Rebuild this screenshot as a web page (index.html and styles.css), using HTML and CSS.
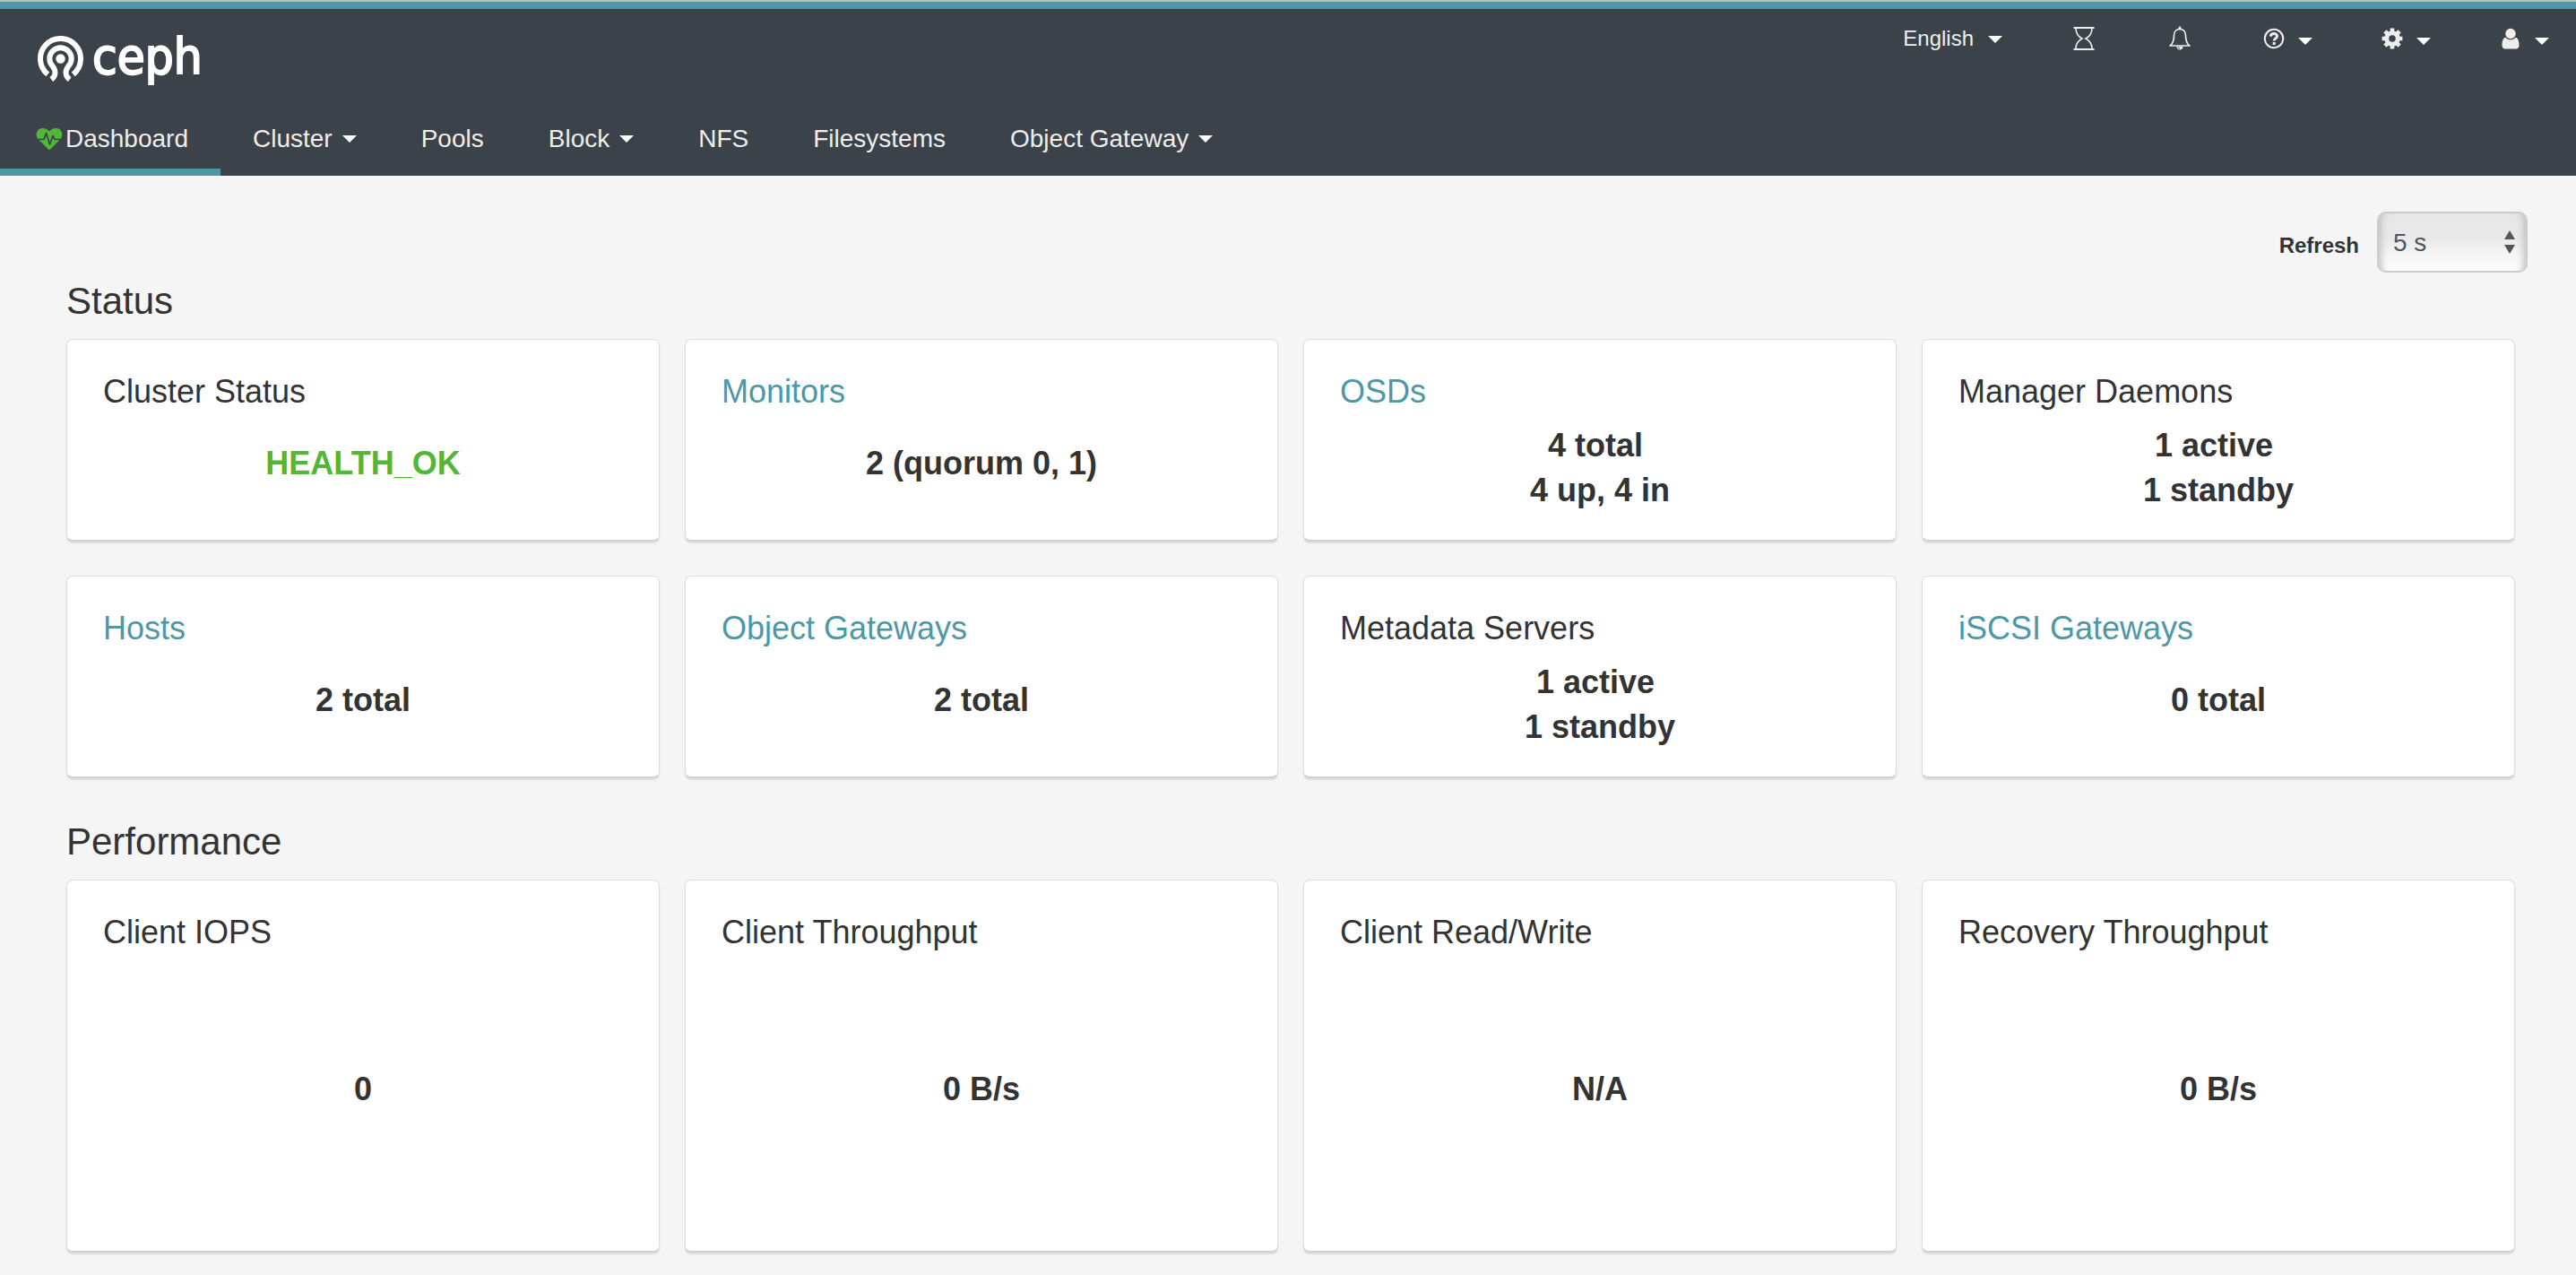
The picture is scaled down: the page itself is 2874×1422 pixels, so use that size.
FILE: index.html
```html
<!DOCTYPE html>
<html lang="en">
<head>
<meta charset="utf-8">
<meta name="viewport" content="width=device-width, initial-scale=1">
<title>Ceph</title>
<link rel="stylesheet" href="styles.css">
</head>
<body>
<header class="header">
  <div class="topbar">
    <a class="brand" href="#">
      <svg class="brand-mark" viewBox="0 0 51 51" fill="none" stroke="#fff" aria-hidden="true">
        <path stroke-width="6" d="M11.3 42.9A22.5 22.5 0 1 1 39.7 42.9"/>
        <path stroke-width="6" d="M15.3 48.6C20.5 44.5 20.5 39 17 34.2A12.2 12.2 0 1 1 34 34.2C30.5 39 30.5 44.5 35.7 48.6"/>
        <circle cx="25.5" cy="25.5" r="5.2" fill="#fff" stroke="none"/>
      </svg>
      <span class="brand-name">ceph</span>
    </a>
    <div class="tools">
      <button class="tool tool--language" type="button">English<span class="caret"></span></button>
      <button class="tool tool--single" type="button" aria-label="Background tasks">
        <svg class="tool-icon" viewBox="0 0 28 28" fill="none" stroke="#eee" stroke-width="1.6" aria-hidden="true">
          <path stroke-width="2" d="M2.5 2H25.5M2.5 26H25.5"/>
          <path d="M5 2.5C5 8.5 8 12 12 14C8 16 5 19.5 5 25.5M23 2.5C23 8.5 20 12 16 14C20 16 23 19.5 23 25.5"/>
        </svg>
      </button>
      <button class="tool tool--single" type="button" aria-label="Notifications">
        <svg class="tool-icon" viewBox="0 0 28 28" aria-hidden="true">
          <path fill="none" stroke="#eee" stroke-width="1.7" stroke-linejoin="round" d="M14 3.5C9.8 3.5 7.5 6.5 7.5 10.5C7.5 17 6 20 3 22H25C22 20 20.5 17 20.5 10.5C20.5 6.5 18.2 3.5 14 3.5Z"/>
          <path fill="#eee" d="M12.6 3.5V2A1.4 1.4 0 0 1 15.4 2V3.5ZM10.5 23H17.5A3.5 3.5 0 0 1 10.5 23Z"/>
          <path fill="none" stroke="#3b4249" d="M12.2 23.5A2 2 0 0 0 14 25.3"/>
        </svg>
      </button>
      <button class="tool" type="button" aria-label="Help">
        <svg class="tool-icon" viewBox="0 0 28 28" fill="none" stroke="#eee" aria-hidden="true">
          <circle cx="14" cy="14" r="10.2" stroke-width="2"/>
          <path stroke-width="3" d="M10.3 11.7C10.7 7.5 17.7 7.7 17.5 11.5C17.4 13.7 14.2 13.8 14.2 16.5"/>
          <path stroke-width="3" d="M14.2 18V21"/>
        </svg><span class="caret"></span>
      </button>
      <button class="tool" type="button" aria-label="Settings">
        <svg class="tool-icon" viewBox="0 0 28 28" fill="none" stroke="#eee" aria-hidden="true">
          <circle cx="14" cy="14" r="6.3" stroke-width="5"/>
          <path stroke-width="4.6" d="M14 2.6V6.5M14 21.5V25.4M2.6 14H6.5M21.5 14H25.4M5.9 5.9L8.7 8.7M19.3 19.3L22.1 22.1M5.9 22.1L8.7 19.3M19.3 8.7L22.1 5.9"/>
        </svg><span class="caret"></span>
      </button>
      <button class="tool" type="button" aria-label="User">
        <svg class="tool-icon" viewBox="0 0 28 28" fill="#eee" aria-hidden="true">
          <circle cx="14" cy="8.5" r="5.7"/>
          <path d="M8.500 12.7C10 14.5 12 15.3 14 15.3C16 15.3 18 14.5 19.5 12.7C22.5 13.2 23.5 17 23.5 21.5C23.5 24 22 25.5 20 25.5H8C6 25.5 4.5 24 4.5 21.5C4.5 17 5.5 13.2 8.5 12.7Z"/>
        </svg><span class="caret"></span>
      </button>
    </div>
  </div>
  <nav class="nav" aria-label="Main">
    <a class="nav-item nav-item--active" href="#">
      <svg class="nav-heart" viewBox="0 0 30 26" aria-hidden="true">
        <path fill="#52b738" d="M15 25.500L2.800 13.500C-1.500 8.500 1 1 7.500 1C11.500 1 13.500 3 15 4.500C16.500 3 18.500 1 22.500 1C29 1 31.500 8.500 27.200 13.500Z"/>
        <path fill="none" stroke="#3b4249" stroke-width="1.700" stroke-linejoin="round" d="M1 13.500H9L11.500 6.500L15.500 19L19 9.500L21 13.500H29"/>
      </svg>Dashboard</a>
    <button class="nav-item" type="button">Cluster<span class="caret"></span></button>
    <a class="nav-item" href="#">Pools</a>
    <button class="nav-item" type="button">Block<span class="caret"></span></button>
    <a class="nav-item" href="#">NFS</a>
    <a class="nav-item" href="#">Filesystems</a>
    <button class="nav-item" type="button">Object Gateway<span class="caret"></span></button>
  </nav>
</header>
<main class="main">
  <div class="refresh">
    <label class="refresh-label" for="refresh">Refresh</label>
    <div class="select">
      <select class="select-control" id="refresh"><option>5 s</option><option>10 s</option><option>15 s</option><option>30 s</option></select>
      <svg class="select-arrows" viewBox="0 0 14 26" fill="#555" aria-hidden="true"><path d="M7 0L13 10H1ZM1 16H13L7 26Z"/></svg>
    </div>
  </div>
  <section class="group">
    <h2 class="group-title">Status</h2>
    <div class="cards">
      <article class="card"><h3 class="card-title">Cluster Status</h3><div class="card-value card-value--ok">HEALTH_OK</div></article>
      <article class="card"><h3 class="card-title"><a href="#">Monitors</a></h3><div class="card-value">2 (quorum 0, 1)</div></article>
      <article class="card"><h3 class="card-title"><a href="#">OSDs</a></h3><div class="card-value card-value--lines"><span>4 total </span><span>4 up, 4 in</span></div></article>
      <article class="card"><h3 class="card-title">Manager Daemons</h3><div class="card-value card-value--lines"><span>1 active </span><span>1 standby</span></div></article>
      <article class="card"><h3 class="card-title"><a href="#">Hosts</a></h3><div class="card-value">2 total</div></article>
      <article class="card"><h3 class="card-title"><a href="#">Object Gateways</a></h3><div class="card-value">2 total</div></article>
      <article class="card"><h3 class="card-title">Metadata Servers</h3><div class="card-value card-value--lines"><span>1 active </span><span>1 standby</span></div></article>
      <article class="card"><h3 class="card-title"><a href="#">iSCSI Gateways</a></h3><div class="card-value">0 total</div></article>
    </div>
  </section>
  <section class="group">
    <h2 class="group-title">Performance</h2>
    <div class="cards cards--tall">
      <article class="card"><h3 class="card-title">Client IOPS</h3><div class="card-value">0</div></article>
      <article class="card"><h3 class="card-title">Client Throughput</h3><div class="card-value">0 B/s</div></article>
      <article class="card"><h3 class="card-title">Client Read/Write</h3><div class="card-value">N/A</div></article>
      <article class="card"><h3 class="card-title">Recovery Throughput</h3><div class="card-value">0 B/s</div></article>
    </div>
  </section>
</main>
</body>
</html>
```
FILE: styles.css
```css
* {
  box-sizing: border-box;
}

body {
  margin: 0;
  background: #f5f5f5;
  color: #333;
  font-family: "Liberation Sans", Arial, sans-serif;
  font-size: 28px;
}

a {
  color: #4c98a7;
  text-decoration: none;
}

button {
  border: 0;
  background: none;
  font-family: inherit;
  cursor: pointer;
}

/* Header */
.header {
  border-top: 2px solid #bbb;
  background: #3b4249;
}

.topbar {
  display: flex;
  justify-content: space-between;
  align-items: flex-start;
  height: 110px;
  padding: 0 30px 0 42px;
  border-top: 8px solid #4c98a7;
}

.brand {
  display: flex;
  align-items: flex-start;
  gap: 10px;
  padding-top: 30px;
  color: #fff;
}

.brand-mark {
  width: 51px;
  height: 51px;
}

.brand-name {
  font-family: "DejaVu Sans Condensed", Roboto, sans-serif;
  font-size: 56px;
  line-height: 46px;
  -webkit-text-stroke: 2px #fff;
}

.tools {
  display: flex;
  gap: 75px;
  padding-top: 18px;
}

.tool {
  display: flex;
  align-items: center;
  height: 30px;
  padding: 0;
  color: #eee;
  font-size: 24px;
}

.tool--single {
  padding: 0 2px;
}

.tool-icon {
  width: 28px;
  height: 28px;
}

.caret {
  margin-left: 11px;
  border: 8px solid transparent;
  border-top-color: #fff;
  border-bottom-width: 0;
}

.tool .caret {
  margin-top: 6px;
  margin-left: 13px;
}

.tool--language .caret {
  margin-top: 2px;
  margin-left: 16px;
}

.nav {
  display: flex;
}

.nav-item {
  display: flex;
  align-items: center;
  height: 84px;
  padding: 9px 36px 0;
  border-bottom: 8px solid transparent;
  color: #eee;
  font-size: 28px;
}

.nav-item--active {
  padding-left: 40px;
  border-bottom-color: #4c98a7;
}

.nav-heart {
  width: 30px;
  height: 26px;
  margin-right: 3px;
}

/* Refresh interval */
.refresh {
  display: flex;
  justify-content: flex-end;
  align-items: center;
  gap: 20px;
  padding: 40px 54px 0;
}

.refresh-label {
  padding-top: 8px;
  font-size: 24px;
  font-weight: 700;
}

.select {
  position: relative;
  width: 168px;
}

.select-control {
  appearance: none;
  display: block;
  width: 100%;
  height: 68px;
  padding: 0 16px;
  border: 2px solid #ccc;
  border-radius: 10px;
  background: linear-gradient(#e6e6e6, #e8e8e8 40%, #fff);
  box-shadow: inset 10px 0 8px -8px #bbb, inset -10px 0 8px -8px #bbb;
  color: #555;
  font-family: inherit;
  font-size: 28px;
}

.select-arrows {
  position: absolute;
  top: 21px;
  right: 13px;
  width: 14px;
  height: 26px;
  pointer-events: none;
}

/* Card groups */
.group {
  padding: 7px 68px 39px 74px;
}

.group-title {
  margin: 0 0 17px;
  font-size: 42px;
  font-weight: 400;
  line-height: 50px;
}

.cards {
  display: grid;
  grid-template-columns: repeat(4, 1fr);
  grid-auto-rows: minmax(226px, auto);
  gap: 38px 28px;
}

.cards--tall {
  grid-auto-rows: minmax(416px, auto);
}

.card {
  display: flex;
  flex-direction: column;
  padding: 33px 40px 30px;
  border: 1px solid #ddd;
  border-bottom: 2px solid #d1d1d1;
  border-radius: 7px;
  background: #fff;
  box-shadow: 0 2px 2px rgba(0, 0, 0, 0.1);
}

.card-title {
  margin: 0;
  font-size: 36px;
  font-weight: 400;
  line-height: 50px;
}

.card-value {
  display: flex;
  flex: 1;
  flex-direction: column;
  align-items: center;
  justify-content: center;
  font-size: 36px;
  font-weight: 700;
  line-height: 50px;
  white-space: pre;
}

.card-value--lines {
  padding-top: 10px;
}

.card-value--ok {
  color: #52b738;
}
```
